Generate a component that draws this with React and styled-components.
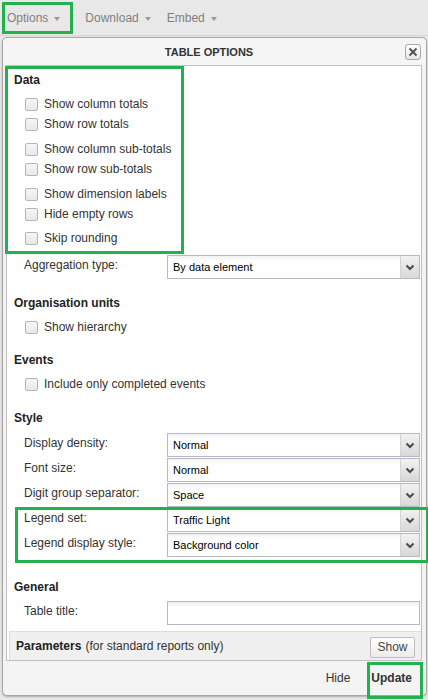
import React from "react";
import styled, { createGlobalStyle, css } from "styled-components";

const GREEN = "#22b14c";

const GlobalStyle = createGlobalStyle`
  html, body { margin: 0; padding: 0; }
  body {
    background: #e8e8e8;
    font-family: "Liberation Sans", Arial, sans-serif;
    font-size: 12px;
    color: #333;
  }
  *, *::before, *::after { box-sizing: border-box; }
`;

// green annotation box drawn over a part of the screen
const marked = css`
  position: relative;
  &::after {
    content: "";
    position: absolute;
    pointer-events: none;
    border: 3px solid ${GREEN};
    top: ${(p) => p.$mark.top}px;
    left: ${(p) => p.$mark.left}px;
    width: ${(p) => p.$mark.width}px;
    height: ${(p) => p.$mark.height}px;
  }
`;

const Page = styled.div`
  width: 428px;
  height: 700px;
  overflow: hidden;
`;

const Toolbar = styled.div`
  display: flex;
  height: 36px;
  padding-left: 2px;
  border-bottom: 1px solid #d6d6d6;
`;

const MenuItem = styled.div`
  display: flex;
  align-items: center;
  gap: 6px;
  padding: ${(p) => (p.$first ? "0 17px 0 5px" : "0 8px")};
  color: #808080;
  font-size: 12px;
  ${(p) => p.$mark && marked}
`;

const Caret = styled.span`
  width: 0;
  height: 0;
  margin-top: 2px;
  border-top: 4px solid #9a9a9a;
  border-left: 3px solid transparent;
  border-right: 3px solid transparent;
`;

const Window = styled.div`
  margin: 1px 0 0 2px;
  width: 425px;
  border: 1px solid #a6a6a6;
  border-radius: 5px;
  background: #f3f3f3;
  box-shadow: 0 1px 2px rgba(0, 0, 0, 0.25);
  display: flex;
  flex-direction: column;
`;

const Header = styled.div`
  display: flex;
  align-items: center;
  height: 27px;
  padding: 0 5px 0 10px;
  background: #f5f5f5;
  border-radius: 5px 5px 0 0;
`;

const Title = styled.div`
  flex: 1;
  text-align: center;
  font-size: 11px;
  font-weight: bold;
  color: #333;
`;

const CloseButton = styled.div`
  width: 16px;
  height: 16px;
  border: 1px solid #a8a8a8;
  border-radius: 3px;
  background: linear-gradient(#ffffff, #e6e6e6);
  display: flex;
  align-items: center;
  justify-content: center;
`;

const Body = styled.div`
  margin: 0 4px 0 3px;
  border: 1px solid #c6bebe;
  background: #fff;
`;

const Content = styled.div`
  padding: 0 1px 0 7px;
`;

const Section = styled.div`
  padding-top: ${(p) => p.$top}px;
  ${(p) => p.$mark && marked}
`;

const SectionTitle = styled.div`
  height: 20px;
  line-height: 21px;
  font-size: 12px;
  font-weight: bold;
  color: #222;
`;

const CheckRow = styled.label`
  display: flex;
  align-items: center;
  gap: 6px;
  height: 20px;
  margin-top: ${(p) => p.$gap || 0}px;
  padding-left: 11px;
  font-size: 12px;
  color: #333;
`;

const Box = styled.span`
  width: 13px;
  height: 13px;
  border: 1px solid #b4b4b4;
  border-radius: 2px;
  background: linear-gradient(#f6f6f6, #e8e8e8);
`;

const FieldRow = styled.div`
  display: flex;
  height: 24px;
  margin-top: ${(p) => p.$gap || 0}px;
`;

const FieldLabel = styled.div`
  width: 153px;
  padding-left: 10px;
  line-height: 20px;
  font-size: 12px;
  color: #333;
`;

const SelectBox = styled.div`
  flex: 1;
  display: flex;
  border: 1px solid #b5b8c8;
  background: linear-gradient(#f2f2f2, #ffffff 5px);
`;

const SelectValue = styled.div`
  flex: 1;
  padding-left: 5px;
  line-height: 22px;
  font-size: 11px;
  color: #000;
`;

const Trigger = styled.div`
  width: 19px;
  border-left: 1px solid #d4d4d4;
  background: linear-gradient(#f2f2f2, #d8d8d8);
  display: flex;
  align-items: center;
  justify-content: center;
`;

const TextInput = styled.div`
  flex: 1;
  border: 1px solid #b5b8c8;
  background: linear-gradient(#f0f0f0, #ffffff 6px);
`;

const LegendGroup = styled.div`
  margin-top: 1px;
  ${(p) => p.$mark && marked}
`;

const ParamsBar = styled.div`
  display: flex;
  align-items: center;
  height: 29px;
  margin: 6px 0 0 2px;
  padding-left: 6px;
  background: #f0f0f0;
  border-top: 1px solid #dcdcdc;
  border-left: 1px solid #dcdcdc;
  font-size: 12px;
  color: #333;
`;

const ParamsTitle = styled.span`
  font-weight: bold;
  color: #222;
`;

const ParamsNote = styled.span`
  margin-left: 4px;
  flex: 1;
`;

const SmallButton = styled.div`
  width: 45px;
  height: 21px;
  margin: 3px 6px 0 0;
  border: 1px solid #bdbdbd;
  border-radius: 2px;
  background: linear-gradient(#ffffff, #ececec);
  line-height: 19px;
  text-align: center;
  font-size: 12px;
  color: #444;
`;

const Footer = styled.div`
  display: flex;
  align-items: center;
  justify-content: flex-end;
  gap: 21px;
  height: 34px;
  padding-right: 14px;
  background: #f4f4f4;
  border-radius: 0 0 5px 5px;
`;

const FooterButton = styled.span`
  font-size: 12px;
  color: #333;
  font-weight: ${(p) => (p.$primary ? "bold" : "normal")};
  ${(p) => p.$mark && marked}
`;

const Chevron = () => (
  <svg width="10" height="7" viewBox="0 0 10 7">
    <path d="M1.5 1.5 L5 5 L8.5 1.5" fill="none" stroke="#4a4a4a" strokeWidth="2" />
  </svg>
);

const CloseIcon = () => (
  <svg width="10" height="10" viewBox="0 0 10 10">
    <path d="M1.5 1.5 L8.5 8.5 M8.5 1.5 L1.5 8.5" stroke="#4d4d4d" strokeWidth="1.8" />
  </svg>
);

const Select = ({ value }) => (
  <SelectBox>
    <SelectValue>{value}</SelectValue>
    <Trigger>
      <Chevron />
    </Trigger>
  </SelectBox>
);

const Check = ({ label, gap }) => (
  <CheckRow $gap={gap}>
    <Box />
    {label}
  </CheckRow>
);

const Field = ({ label, value, gap }) => (
  <FieldRow $gap={gap}>
    <FieldLabel>{label}</FieldLabel>
    <Select value={value} />
  </FieldRow>
);

export default function App() {
  return (
    <Page>
      <GlobalStyle />
      <Toolbar>
        <MenuItem $first $mark={{ top: 2, left: 0, width: 71, height: 32 }}>
          Options <Caret />
        </MenuItem>
        <MenuItem>
          Download <Caret />
        </MenuItem>
        <MenuItem>
          Embed <Caret />
        </MenuItem>
      </Toolbar>

      <Window>
        <Header>
          <Title>TABLE OPTIONS</Title>
          <CloseButton>
            <CloseIcon />
          </CloseButton>
        </Header>

        <Body>
          <Content>
            <Section $top={4} $mark={{ top: 0, left: -9, width: 179, height: 188 }}>
              <SectionTitle>Data</SectionTitle>
              <Check gap={4} label="Show column totals" />
              <Check label="Show row totals" />
              <Check gap={5} label="Show column sub-totals" />
              <Check label="Show row sub-totals" />
              <Check gap={5} label="Show dimension labels" />
              <Check label="Hide empty rows" />
              <Check gap={4} label="Skip rounding" />
            </Section>

            <Field gap={7} label="Aggregation type:" value="By data element" />

            <Section $top={14}>
              <SectionTitle>Organisation units</SectionTitle>
              <Check gap={4} label="Show hierarchy" />
            </Section>

            <Section $top={13}>
              <SectionTitle>Events</SectionTitle>
              <Check gap={4} label="Include only completed events" />
            </Section>

            <Section $top={14}>
              <SectionTitle>Style</SectionTitle>
              <Field gap={5} label="Display density:" value="Normal" />
              <Field gap={1} label="Font size:" value="Normal" />
              <Field gap={1} label="Digit group separator:" value="Space" />
              <LegendGroup $mark={{ top: -1, left: 1, width: 414, height: 56 }}>
                <Field label="Legend set:" value="Traffic Light" />
                <Field gap={1} label="Legend display style:" value="Background color" />
              </LegendGroup>
            </Section>

            <Section $top={20}>
              <SectionTitle>General</SectionTitle>
              <FieldRow $gap={4}>
                <FieldLabel>Table title:</FieldLabel>
                <TextInput />
              </FieldRow>
            </Section>
          </Content>

          <ParamsBar>
            <ParamsTitle>Parameters</ParamsTitle>
            <ParamsNote>(for standard reports only)</ParamsNote>
            <SmallButton>Show</SmallButton>
          </ParamsBar>
        </Body>

        <Footer>
          <FooterButton>Hide</FooterButton>
          <FooterButton $primary $mark={{ top: -9, left: -4, width: 56, height: 37 }}>
            Update
          </FooterButton>
        </Footer>
      </Window>
    </Page>
  );
}
